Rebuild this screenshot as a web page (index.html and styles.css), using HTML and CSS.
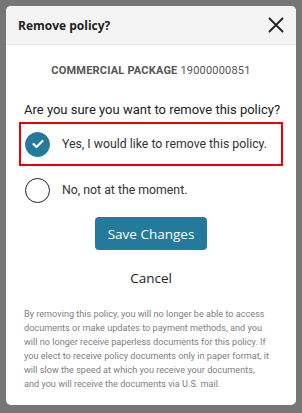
FILE: index.html
```html
<!DOCTYPE html>
<html lang="en">
<head>
    <meta charset="UTF-8">
    <meta name="viewport" content="width=device-width, initial-scale=1.0">
    <title>Remove policy</title>
    <link rel="stylesheet" href="styles.css">
</head>
<body>

    <div class="modal">
        <!-- Cabeçalho -->
        <div class="modal-header">
            <h2 class="modal-title">Remove policy?</h2>
            <button class="close-btn" aria-label="Close">
                <svg width="16" height="16" viewBox="0 0 16 16">
                    <path d="M1 1 L15 15 M15 1 L1 15" stroke="#222" stroke-width="1.8" fill="none"/>
                </svg>
            </button>
        </div>

        <div class="modal-body">
            <div class="policy-name"><b>COMMERCIAL PACKAGE</b> 19000000851</div>

            <p class="question">Are you sure you want to remove this policy?</p>

            <label class="option selected">
                <span class="radio checked">
                    <svg width="12" height="10" viewBox="0 0 12 10">
                        <path d="M1.5 5 L4.5 8 L10.5 2" stroke="#fff" stroke-width="2.2" fill="none" stroke-linecap="round" stroke-linejoin="round"/>
                    </svg>
                </span>
                <span class="option-text">Yes, I would like to remove this policy.</span>
            </label>

            <label class="option">
                <span class="radio"></span>
                <span class="option-text">No, not at the moment.</span>
            </label>

            <div class="actions">
                <button class="save-btn">Save Changes</button>
                <button class="cancel-btn">Cancel</button>
            </div>

            <p class="disclaimer">By removing this policy, you will no longer be able to access documents or make updates to payment methods, and you will no longer receive paperless documents for this policy. If you elect to receive policy documents only in paper format, it will slow the speed at which you receive your documents, and you will receive the documents via U.S. mail.</p>
        </div>
    </div>

</body>
</html>
```

FILE: styles.css
```css
/* Estilos globais */
body {
    margin: 0;
    padding: 6px 6px 0;
    background-color: #767676;
    font-family: Roboto, "Open Sans", sans-serif;
    height: 407px;
    overflow: hidden;
}

/* Modal */
.modal {
    background-color: #fff;
    border-radius: 5px;
    overflow: hidden;
    height: 399px;
}

.modal-header {
    display: flex;
    align-items: center;
    justify-content: space-between;
    height: 38px;
    padding: 0 12px 0 12px;
    background-color: #f4f4f4;
    border-bottom: 1px solid #e6e6e6;
}

.modal-title {
    margin: 0;
    font-family: "Open Sans", sans-serif;
    font-size: 12px;
    font-weight: 700;
    color: #222;
}

.close-btn {
    background: none;
    border: none;
    padding: 0;
    display: flex;
    cursor: pointer;
}

.modal-body {
    padding: 19px 13px 0 13px;
}

.policy-name {
    text-align: center;
    font-size: 11px;
    color: #555;
    letter-spacing: 0.2px;
}

.question {
    margin: 25px 0 5px 5px;
    font-size: 13px;
    color: #222;
}

/* Opções */
.option {
    display: flex;
    align-items: center;
    gap: 12px;
    height: 40px;
    padding: 0 4px;
    border: 2px solid transparent;
    font-size: 12.3px;
    color: #333;
}

.option.selected {
    border-color: #e8000b;
    margin-bottom: 2px;
}

.radio {
    width: 23px;
    height: 23px;
    border: 1px solid #222;
    border-radius: 50%;
    display: flex;
    align-items: center;
    justify-content: center;
    flex-shrink: 0;
}

.radio.checked {
    background-color: #237a9b;
    border-color: #237a9b;
}

/* Botões */
.actions {
    display: flex;
    flex-direction: column;
    align-items: center;
    margin-top: 5px;
}

.save-btn {
    width: 112px;
    height: 33px;
    border: none;
    border-radius: 4px;
    background-color: #237a9b;
    color: #fff;
    font-family: "Open Sans", sans-serif;
    font-size: 13.5px;
    cursor: pointer;
}

.cancel-btn {
    margin-top: 18px;
    background: none;
    border: none;
    font-family: "Open Sans", sans-serif;
    font-size: 13.5px;
    color: #222;
    cursor: pointer;
}

.disclaimer {
    margin: 19px 13px 0 5px;
    font-size: 9.15px;
    line-height: 14px;
    color: #808080;
}
```
